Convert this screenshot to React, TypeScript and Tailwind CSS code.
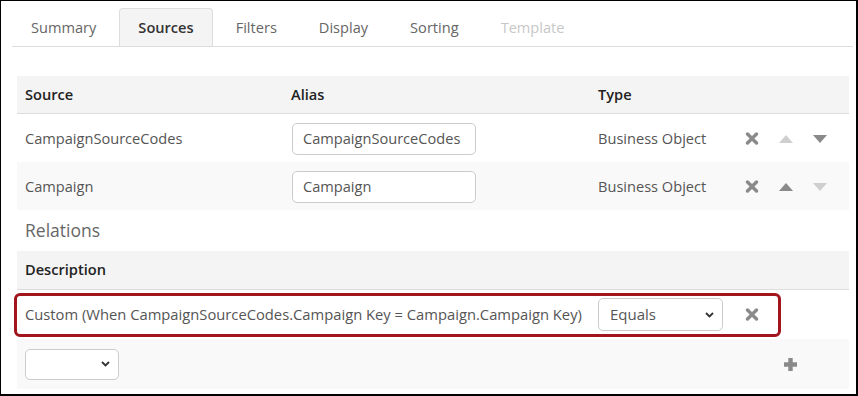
import { useState } from "react";

const tabs = ["Summary", "Sources", "Filters", "Display", "Sorting", "Template"];

function RemoveIcon() {
  return (
    <svg width="14" height="13" viewBox="0 0 14 13">
      <path
        d="M2.5 2 L11.5 11 M11.5 2 L2.5 11"
        stroke="#8a8a8a"
        strokeWidth="3.4"
        strokeLinecap="round"
        fill="none"
      />
    </svg>
  );
}

function Arrow({ up, light }: { up?: boolean; light?: boolean }) {
  return (
    <svg width="14" height="8" viewBox="0 0 14 8">
      <polygon
        points={up ? "0,8 14,8 7,0" : "0,0 14,0 7,8"}
        fill={light ? "#cfcfcf" : "#8a8a8a"}
      />
    </svg>
  );
}

function PlusIcon() {
  return (
    <svg width="15" height="15" viewBox="0 0 15 15">
      <path d="M7.5 1 V14 M1 7.5 H14" stroke="#8a8a8a" strokeWidth="4.4" fill="none" />
    </svg>
  );
}

function Chevron() {
  return (
    <svg width="9" height="6" viewBox="0 0 9 6">
      <path d="M1 1 L4.5 4.5 L8 1" stroke="#333" strokeWidth="1.8" fill="none" />
    </svg>
  );
}

function Select({ value, className }: { value: string; className: string }) {
  return (
    <div
      className={`flex items-center justify-between rounded-[5px] border border-[#cbcbcb] bg-white pl-[11px] pr-[8px] text-[15px] text-[#555] ${className}`}
    >
      <span>{value}</span>
      <Chevron />
    </div>
  );
}

export default function App() {
  const [active] = useState("Sources");

  const sources = [
    { name: "CampaignSourceCodes", type: "Business Object", upLight: true, downLight: false },
    { name: "Campaign", type: "Business Object", upLight: false, downLight: true },
  ];

  return (
    <div className="h-[396px] w-[858px] overflow-hidden border-b-2 border-l border-r-2 border-t border-black bg-white font-['Open_Sans',sans-serif] text-[14.6px] text-[#555]">
      {/* tabs */}
      <div className="ml-[11px] mr-[3px] mt-[7px] flex gap-1 border-b border-[#ddd]">
        {tabs.map((t) => (
          <div
            key={t}
            className={`flex h-[38px] items-center rounded-t-[4px] border border-b-0 px-[18px] ${
              t === active
                ? "border-[#ddd] bg-[#f4f4f4] font-semibold text-[#333]"
                : t === "Template"
                ? "border-transparent text-[#c8c8c8]"
                : "border-transparent text-[#666]"
            }`}
          >
            {t}
          </div>
        ))}
      </div>

      <div className="ml-[16px] mt-[29px] w-[832px]">
        {/* sources header */}
        <div className="grid h-[38px] grid-cols-[266px_307px_150px_1fr] items-center border-b border-[#ddd] bg-[#f4f4f4] font-semibold text-[#222]">
          <div className="pl-2">Source</div>
          <div className="pl-2">Alias</div>
          <div className="pl-2">Type</div>
          <div />
        </div>

        {sources.map((s, i) => (
          <div
            key={s.name}
            className={`grid h-[48px] grid-cols-[266px_307px_150px_1fr] items-center pt-px ${
              i % 2 === 1 ? "bg-[#f9f9f9]" : "bg-white"
            }`}
          >
            <div className="pl-2">{s.name}</div>
            <div className="pl-[9px]">
              <div className="flex h-[32px] w-[184px] items-center rounded-[5px] border border-[#cbcbcb] bg-white pl-[10px]">
                {s.name}
              </div>
            </div>
            <div className="pl-2">{s.type}</div>
            <div className="flex items-center gap-5 pl-[5px]">
              <RemoveIcon />
              <Arrow up light={s.upLight} />
              <Arrow light={s.downLight} />
            </div>
          </div>
        ))}

        {/* relations */}
        <div className="flex h-[41px] items-center pl-2 text-[17.5px] text-[#666]">Relations</div>

        <div className="flex h-[39px] items-center border-b border-[#ddd] bg-[#f4f4f4] pl-2 font-semibold text-[#222]">
          Description
        </div>

        <div className="relative flex h-[49px] items-center bg-white">
          <div className="w-[581px] whitespace-nowrap pl-2 text-[14.75px]">
            Custom (When CampaignSourceCodes.Campaign Key = Campaign.Campaign Key)
          </div>
          <Select value="Equals" className="h-[33px] w-[125px]" />
          <div className="pl-[22px]">
            <RemoveIcon />
          </div>
          <div className="pointer-events-none absolute left-[-3px] top-[3px] h-[44px] w-[767px] rounded-[6px] border-[3px] border-[#a3151d]" />
        </div>

        <div className="flex h-[50px] items-center justify-between bg-[#f9f9f9] pl-2 pr-[51px]">
          <Select value="" className="h-[31px] w-[94px]" />
          <PlusIcon />
        </div>
      </div>
    </div>
  );
}
